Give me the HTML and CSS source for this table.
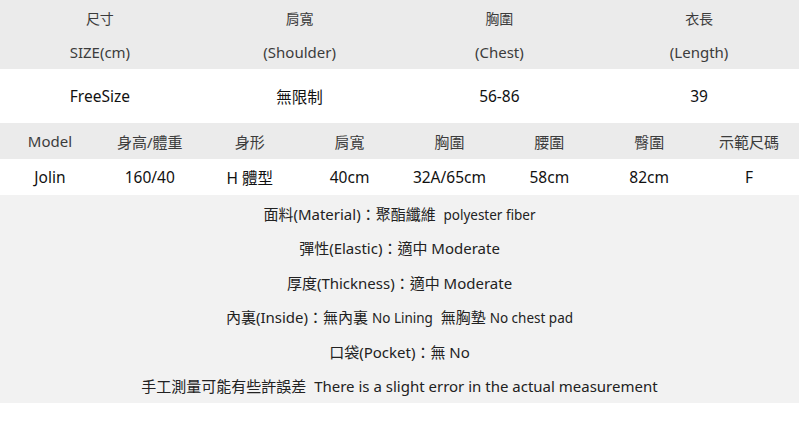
FILE: index.html
```html
<!DOCTYPE html>
<html lang="zh-Hant">
<head>
<meta charset="utf-8">
<title>Size chart</title>
<link rel="stylesheet" href="styles.css">
</head>
<body>
<div class="page">
  <section class="size">
    <div class="grid4 head">
      <div class="cell">尺寸</div>
      <div class="cell">肩寬</div>
      <div class="cell">胸圍</div>
      <div class="cell">衣長</div>
    </div>
    <div class="grid4 head sub">
      <div class="cell">SIZE(cm)</div>
      <div class="cell">(Shoulder)</div>
      <div class="cell">(Chest)</div>
      <div class="cell">(Length)</div>
    </div>
    <div class="grid4 value">
      <div class="cell">FreeSize</div>
      <div class="cell">無限制</div>
      <div class="cell">56-86</div>
      <div class="cell">39</div>
    </div>
  </section>
  <section class="model">
    <div class="grid8 mhead">
      <div class="cell">Model</div>
      <div class="cell">身高/體重</div>
      <div class="cell">身形</div>
      <div class="cell">肩寬</div>
      <div class="cell">胸圍</div>
      <div class="cell">腰圍</div>
      <div class="cell">臀圍</div>
      <div class="cell">示範尺碼</div>
    </div>
    <div class="grid8 mvalue">
      <div class="cell">Jolin</div>
      <div class="cell">160/40</div>
      <div class="cell">H 體型</div>
      <div class="cell">40cm</div>
      <div class="cell">32A/65cm</div>
      <div class="cell">58cm</div>
      <div class="cell">82cm</div>
      <div class="cell">F</div>
    </div>
  </section>
  <section class="info">
    <p>面料(Material)：聚酯纖維&nbsp; <span class="sm">polyester fiber</span></p>
    <p>彈性(Elastic)：適中 Moderate</p>
    <p>厚度(Thickness)：適中 Moderate</p>
    <p>內裏(Inside)：無內裏 <span class="sm">No Lining</span>&nbsp; 無胸墊 <span class="sm">No chest pad</span></p>
    <p>口袋(Pocket)：無 No</p>
    <p>手工測量可能有些許誤差&nbsp; There is a slight error in the actual measurement</p>
  </section>
</div>
</body>
</html>
```
FILE: styles.css
```css
* { box-sizing: border-box; }
html, body { margin: 0; padding: 0; background: #ffffff; }
body {
  font-family: "Noto Sans", "Noto Sans CJK TC", sans-serif;
  font-size: 15px;
  color: #111;
}
.page { width: 799px; }
.grid4 { display: grid; grid-template-columns: repeat(4, 1fr); }
.grid8 { display: grid; grid-template-columns: repeat(8, 1fr); }
.cell { display: flex; align-items: center; justify-content: center; white-space: nowrap; }
.head { background: #ebebeb; color: #3c3c3c; height: 35px; }
.head.sub { height: 34px; }
.head:first-child .cell { font-size: 14px; }
.value { height: 54px; color: #111; font-size: 15.5px; }
.mhead { background: #ebebeb; color: #3c3c3c; height: 36px; }
.mvalue { height: 36px; color: #111; font-size: 15.5px; }
.info {
  background: #f2f2f2;
  height: 208px;
  padding-top: 2px;
  color: #222;
  text-align: center;
}
.info p { margin: 0; height: 34.4px; line-height: 34.4px; white-space: nowrap; }
.sm { font-size: 13.5px; }
```
